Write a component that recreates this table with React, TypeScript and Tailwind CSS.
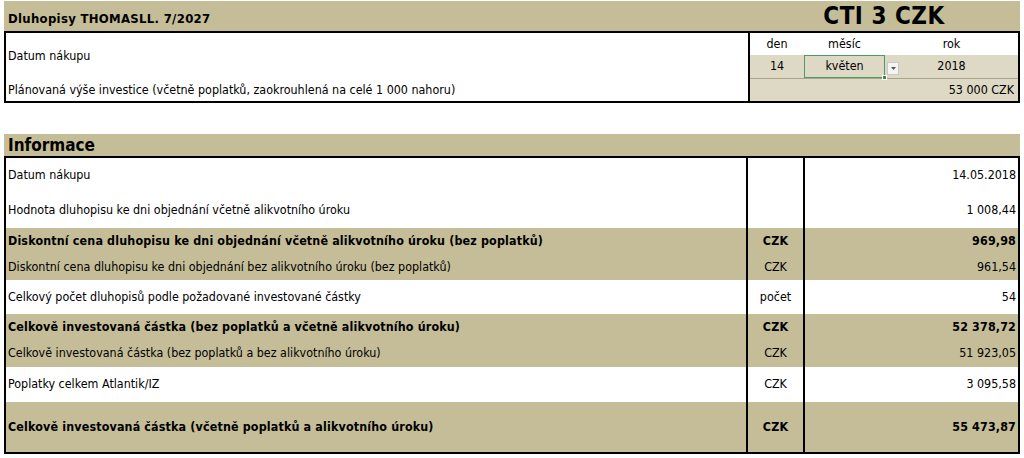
import React from "react";

type Row = {
  label: string;
  unit: string;
  value: string;
  h: string;
  tan?: boolean;
  bold?: boolean;
};

const rows: Row[] = [
  { label: "Datum nákupu", unit: "", value: "14.05.2018", h: "h-[35px]" },
  { label: "Hodnota dluhopisu ke dni objednání včetně alikvotního úroku", unit: "", value: "1 008,44", h: "h-[35px]" },
  { label: "Diskontní cena dluhopisu ke dni objednání včetně alikvotního úroku (bez poplatků)", unit: "CZK", value: "969,98", h: "h-[26px]", tan: true, bold: true },
  { label: "Diskontní cena dluhopisu ke dni objednání bez alikvotního úroku (bez poplatků)", unit: "CZK", value: "961,54", h: "h-[26px]", tan: true },
  { label: "Celkový počet dluhopisů podle požadované investované částky", unit: "počet", value: "54", h: "h-[34px]" },
  { label: "Celkově investovaná částka (bez poplatků a včetně alikvotního úroku)", unit: "CZK", value: "52 378,72", h: "h-[26px]", tan: true, bold: true },
  { label: "Celkově investovaná částka (bez poplatků a bez alikvotního úroku)", unit: "CZK", value: "51 923,05", h: "h-[27px]", tan: true },
  { label: "Poplatky celkem Atlantik/IZ", unit: "CZK", value: "3 095,58", h: "h-[35px]" },
  { label: "Celkově investovaná částka (včetně poplatků a alikvotního úroku)", unit: "CZK", value: "55 473,87", h: "h-[50px]", tan: true, bold: true },
];

export default function App() {
  return (
    <div className="w-[1024px] h-[458px] bg-white pt-px pl-1 text-[12.4px] text-black font-['DejaVu_Sans_Condensed','DejaVu_Sans',sans-serif] overflow-hidden">
      <div className="w-[1016px]">
        {/* title bar */}
        <div className="h-[30px] bg-[#c4bd97] flex">
          <div className="w-[744px] flex items-end pb-[3px] pl-[4px] font-bold text-[13px] tracking-[0.3px]">
            Dluhopisy THOMASLL. 7/2027
          </div>
          <div className="flex-1 flex items-center justify-center font-bold text-[24px] leading-none tracking-[0.5px]">
            CTI 3 CZK
          </div>
        </div>

        {/* purchase box */}
        <div className="h-[72px] border-2 border-black flex">
          <div className="w-[742px] flex flex-col pl-[2px]">
            <div className="h-[46px] flex items-center">Datum nákupu</div>
            <div className="flex-1 flex items-center">
              Plánovaná výše investice (včetně poplatků, zaokrouhlená na celé 1 000 nahoru)
            </div>
          </div>
          <div className="flex-1 border-l-2 border-black flex flex-col">
            <div className="h-[22px] flex items-center bg-white">
              <div className="w-[54px] text-center">den</div>
              <div className="w-[81px] text-center">měsíc</div>
              <div className="flex-1 text-center">rok</div>
            </div>
            <div className="h-[24px] flex bg-[#ddd9c4] border-b border-[#a8a38a]">
              <div className="w-[54px] flex items-center justify-center">14</div>
              <div className="relative w-[81px] border border-[#4f9a62] flex items-center justify-center">
                květen
                <span className="absolute -right-[3px] -bottom-[3px] w-[5px] h-[5px] bg-[#3f8a52] border border-white" />
              </div>
              <div className="relative flex-1 flex items-center justify-center">
                <span className="absolute left-[2px] top-[7px] w-[12px] h-[13px] bg-[#f4f4f4] border border-[#c9c9c9] flex items-center justify-center">
                  <svg width="5" height="3" viewBox="0 0 5 3">
                    <path d="M0 0h5L2.5 3z" fill="#555" />
                  </svg>
                </span>
                2018
              </div>
            </div>
            <div className="flex-1 bg-[#ddd9c4] flex items-center justify-end pr-[4px]">53 000 CZK</div>
          </div>
        </div>

        {/* Informace */}
        <div className="mt-[31px] h-[22px] bg-[#c4bd97] flex items-center pl-[4px] font-bold text-[17px] leading-none">
          Informace
        </div>
        <div className="border-2 border-black">
          {rows.map((r) => (
            <div
              key={r.label}
              className={`flex ${r.h} ${r.tan ? "bg-[#c4bd97]" : "bg-white"} ${r.bold ? "font-bold tracking-[0.15px]" : ""}`}
            >
              <div className="w-[740px] flex items-center pl-[2px] whitespace-nowrap">{r.label}</div>
              <div className="w-[59px] border-x-2 border-black flex items-center justify-center">{r.unit}</div>
              <div className="flex-1 flex items-center justify-end pr-[2px]">{r.value}</div>
            </div>
          ))}
        </div>
      </div>
    </div>
  );
}
